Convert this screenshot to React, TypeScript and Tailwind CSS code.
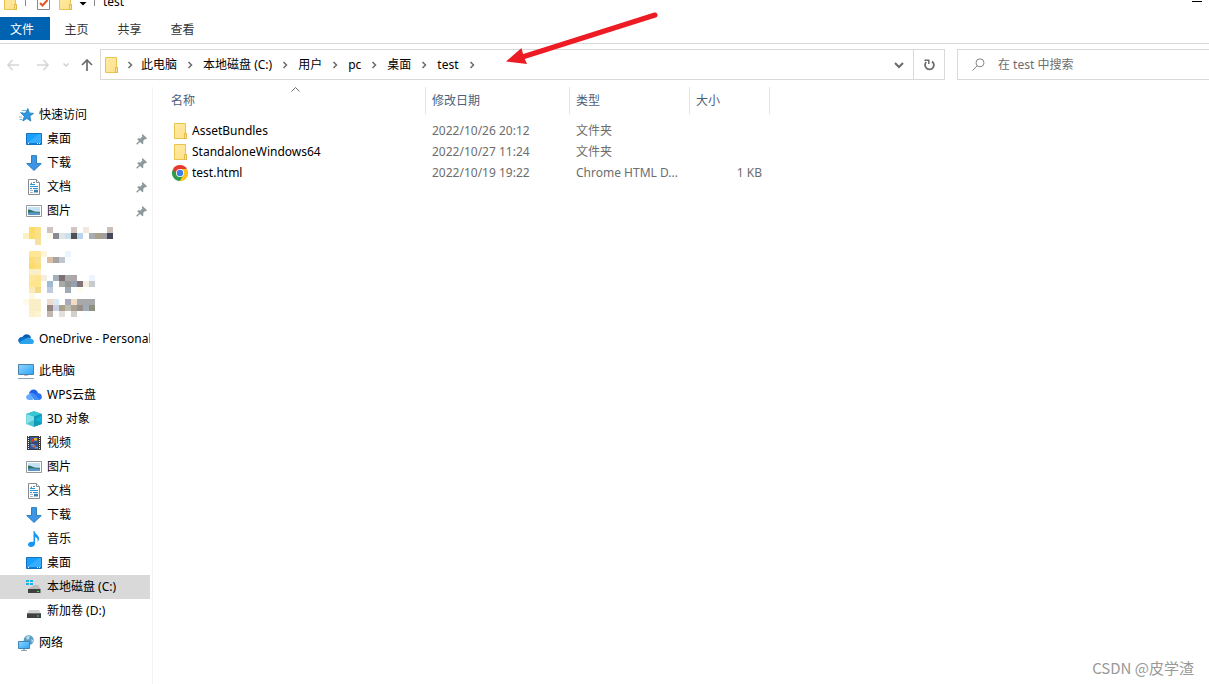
import React from 'react';

interface NavItem {
  label: string;
  icon: React.FC;
  pinned?: boolean;
  selected?: boolean;
}

interface FileEntry {
  name: string;
  icon: React.FC;
  modified: string;
  type: string;
  size: string;
}

const FolderIcon: React.FC = () => (
  <svg className="w-4 h-4 shrink-0" viewBox="0 0 16 16">
    <defs>
      <linearGradient id="folder" x1="0" y1="0" x2="1" y2="1">
        <stop offset="0" stopColor="#ffeaa3" />
        <stop offset="1" stopColor="#ffe08a" />
      </linearGradient>
    </defs>
    <path d="M2.5 .5h11v10h1v5h-12z" fill="url(#folder)" stroke="#e9c54f" />
    <path d="M12.500 15.500v-5h2v5z" fill="#fbe7a0" stroke="#e0b848" />
  </svg>
);

const QuickAccessIcon: React.FC = () => (
  <svg className="w-4 h-4 shrink-0" viewBox="0 0 16 16">
    <path d="M9.800 1.500l1.500 4.400 4.200.5-3.600 2.700.9 5-3.900-2.600-4.100 2.500 1.500-4.700-3-3 4.300-.2z" fill="#2f97de" stroke="#1a78c2" strokeWidth=".8" />
    <path d="M4 3.500h4M2 5.500h3M1 10h3M1.500 12.500h3" stroke="#6db9ea" />
  </svg>
);

const DesktopIcon: React.FC = () => (
  <svg className="w-4 h-4 shrink-0" viewBox="0 0 16 16">
    <path d="M.5 2.500h15v11H.5z" fill="#16a0ff" stroke="#1374bd" />
    <path d="M1 12L13 3h2v9z" fill="#35aeff" />
    <path d="M1 12.500h14" stroke="#0c7cd5" />
    <path d="M2 12.500h1M11 12.500h1M13 12.500h1" stroke="#fff" />
  </svg>
);

const DownloadIcon: React.FC = () => (
  <svg className="w-4 h-4 shrink-0" viewBox="0 0 16 16">
    <path d="M5.500 .6h5v7.900h4.800L8 15.500.7 8.500h4.800z" fill="#3c96e3" stroke="#2476be" strokeWidth=".9" />
  </svg>
);

const DocumentIcon: React.FC = () => (
  <svg className="w-4 h-4 shrink-0" viewBox="0 0 16 16">
    <path d="M2.500 .5h8l3 3v12h-11z" fill="#fff" stroke="#8b8b8b" />
    <path d="M10.500 .5v3h3" fill="#eee" stroke="#8b8b8b" />
    <path d="M7 3.500h2M4 5.500h5M4 7.500h8M7 9.500h5M4 9.500h2" stroke="#2c93d8" />
    <path d="M4 11.500h3M4 13.500h3" stroke="#a9b3ba" />
    <path d="M8 10.800h4v2.700H8z" fill="#3c7fa8" />
    <path d="M4 5.500l2-2.500v3z" fill="#2c93d8" />
  </svg>
);

const PictureIcon: React.FC = () => (
  <svg className="w-4 h-4 shrink-0" viewBox="0 0 16 16">
    <path d="M.5 2.500h15v11H.5z" fill="#fff" stroke="#989898" />
    <path d="M2 4h12v8H2z" fill="#c4e2f6" />
    <path d="M2 6.500c3 0 4 1.500 7 2 2 .4 4 .1 5 .5v1.500H2z" fill="#33715f" />
    <path d="M2 9.800c4-.8 8-.5 12 0V12H2z" fill="#5799c8" />
  </svg>
);

const OneDriveIcon: React.FC = () => (
  <svg className="w-4 h-4 shrink-0" viewBox="0 0 16 16">
    <path d="M4.500 6C6 2.200 11.500 2 13 6.500L10 9 2 12C-.8 9.800.4 6 4.500 6z" fill="#0a5db2" />
    <path d="M4 6c2-.5 3.500.3 5 1.400L4 13C-.5 12.800-1 6.600 4 6z" fill="#0872cc" />
    <path d="M8 7.500c1.500-1.500 4-1.500 5 .2 3.500.3 4 5.300.2 5.300H4.200c-2 0-3-1-3.200-1.600z" fill="#2ba4ec" />
  </svg>
);

const ComputerIcon: React.FC = () => (
  <svg className="w-4 h-4 shrink-0" viewBox="0 0 16 16">
    <defs>
      <linearGradient id="screen" x1="0" y1="0" x2="1" y2="1">
        <stop offset="0" stopColor="#8ed6ff" />
        <stop offset="1" stopColor="#2ea4f4" />
      </linearGradient>
    </defs>
    <path d="M.5 1.500h15v10H.5z" fill="url(#screen)" stroke="#4d83a8" />
    <path d="M6 12h4v1H6z" fill="#b6c6d1" />
    <path d="M0 15.500h16" stroke="#8ba3b9" />
  </svg>
);

const WpsCloudIcon: React.FC = () => (
  <svg className="w-4 h-4 shrink-0" viewBox="0 0 16 16">
    <path d="M3 7C3.500 1.500 10.500.8 12 6l-2 3-4-3z" fill="#1c62e8" />
    <path d="M6 5.800c2 .4 4.500 3.400 6.500 7.200H8.200C6.500 10.500 5 9.200 3.500 7z" fill="#3f8cfa" />
    <path d="M12 6c5 .5 5.200 6.900.5 7C11.500 11 10 9 9 8c1-1.300 2-2 3-2z" fill="#2874ef" />
    <path d="M3.500 7C-1 7.500-1 13 3.500 13H7C7 10 5.500 8 3.500 7z" fill="#65adff" />
  </svg>
);

const ObjectsIcon: React.FC = () => (
  <svg className="w-4 h-4 shrink-0" viewBox="0 0 16 16">
    <path d="M8 .3L15.700 3v10L8 15.800.3 13V3z" fill="#13a3bd" />
    <path d="M8 .3L15.700 3 8 5.500.3 3z" fill="#38c5d4" />
    <path d="M.3 3L8 5.500v10.300L.3 13z" fill="#86e2e8" />
    <path d="M1 12.500L8 9v6.800z" fill="#4cc5d0" />
    <path d="M8 5.500L15.700 3v10L8 15.800z" fill="#1398b5" />
    <path d="M9 9l6.700 3V4z" fill="#0fb4d8" />
  </svg>
);

const VideoIcon: React.FC = () => (
  <svg className="w-4 h-4 shrink-0" viewBox="0 0 16 16">
    <path d="M1 1h14v14H1z" fill="#3b3b3b" />
    <path d="M2.500 1v14M13.500 1v14" stroke="#f1f1f1" strokeDasharray="1 1" />
    <path d="M4 2h8v5.500H4zM4 8.500h8V14H4z" fill="#375aa8" />
    <path d="M6 4h2v3H6z" fill="#c83b31" />
    <path d="M8 3h3v2.500H8z" fill="#e9ae33" />
    <path d="M4 5.500h2v2H4z" fill="#3c8745" />
    <path d="M5 9h3v1.500H5zM9 12h3v1.500H9z" fill="#65a1df" />
    <path d="M6 11.500l2-1.500 2 1-2 1.500z" fill="#dc7632" />
  </svg>
);

const MusicIcon: React.FC = () => (
  <svg className="w-4 h-4 shrink-0" viewBox="0 0 16 16">
    <path d="M7.500 0h1c.3 3 4.500 4 4.500 7.500 0 1.500-.6 2.500-1.500 3.500.6-2.700-.2-4.300-2.500-5v6.500C9 14.600 7.300 16 5 16c-1.800 0-3-.9-3-2.400C2 11.500 4.500 10.300 7.500 11z" fill="#1597f2" />
  </svg>
);

const DriveIcon: React.FC = () => (
  <svg className="w-4 h-4 shrink-0" viewBox="0 0 16 16">
    <path d="M3 7h10l2 3.500H1z" fill="#d2d2d2" />
    <path d="M1 10.300h14V15H1z" fill="#404040" />
    <path d="M11 13h2" stroke="#48dc66" />
  </svg>
);

const SystemDriveIcon: React.FC = () => (
  <svg className="w-4 h-4 shrink-0" viewBox="0 0 16 16">
    <path d="M0 1h3v2H0zM4 1h3v2H4zM0 4h3v2H0zM4 4h3v2H4z" fill="#16b5ee" />
    <path d="M8 6h4l2.500 4H2z" fill="#bcbcbc" />
    <path d="M2 10h12.500v4H2z" fill="#404040" />
    <path d="M11 12.500h2" stroke="#48dc66" />
  </svg>
);

const NetworkIcon: React.FC = () => (
  <svg className="w-4 h-4 shrink-0" viewBox="0 0 16 16">
    <circle cx="10.700" cy="5.300" r="5" fill="#5a9bc4" />
    <path d="M8 2c2-1.500 3-1 4-.5L11 4 9 5zM13 4l2.500 1.500L14 8z" fill="#b4dbea" />
    <path d="M.5 6.500h11v7H.5z" fill="url(#screen)" stroke="#3f85b8" />
    <path d="M5 14h2v1H5z" fill="#9eb5c5" />
    <path d="M3 15.500h6" stroke="#8ba3b9" />
  </svg>
);

const ChromeIcon: React.FC = () => (
  <svg className="w-4 h-4 shrink-0" viewBox="0 0 16 16">
    <path d="M8 8L1.070 4A8 8 0 0 1 14.930 4z" fill="#e33b2e" />
    <path d="M8 8L14.930 4A8 8 0 0 1 8 16z" fill="#fcc31e" />
    <path d="M8 8v8A8 8 0 0 1 1.070 4z" fill="#2d9d4c" />
    <path d="M4.540 10L1.070 4 8 4z" fill="#e33b2e" />
    <path d="M11.460 10L8 16 4.540 10z" fill="#2d9d4c" />
    <path d="M8 4h6.930A8 8 0 0 1 8 16l3.460-6z" fill="#fcc31e" />
    <circle cx="8" cy="8" r="4" fill="#fff" />
    <circle cx="8" cy="8" r="3.200" fill="#3f7de8" />
  </svg>
);

const PinIcon: React.FC = () => (
  <svg className="w-[11px] h-[11px] shrink-0" viewBox="0 0 11 11">
    <path d="M6.500 0l4.500 4.300-1 .9-.9-.2-2 2 .3 2.300-1 .9L1.200 5.200l.9-1 2.300.2 2-2-.5-1.200z" fill="#8d979e" />
    <path d="M4 7L.7 10.300" stroke="#8d979e" strokeWidth="1.400" />
  </svg>
);

const CrumbChevron: React.FC = () => (
  <svg className="w-2 h-2" viewBox="0 0 8 8">
    <path d="M2.500 1l3 3-3 3" fill="none" stroke="#6b6b6b" strokeWidth="1.500" />
  </svg>
);

const quickAccess: NavItem[] = [
  { label: '桌面', icon: DesktopIcon, pinned: true },
  { label: '下载', icon: DownloadIcon, pinned: true },
  { label: '文档', icon: DocumentIcon, pinned: true },
  { label: '图片', icon: PictureIcon, pinned: true }
];

const thisPc: NavItem[] = [
  { label: 'WPS云盘', icon: WpsCloudIcon },
  { label: '3D 对象', icon: ObjectsIcon },
  { label: '视频', icon: VideoIcon },
  { label: '图片', icon: PictureIcon },
  { label: '文档', icon: DocumentIcon },
  { label: '下载', icon: DownloadIcon },
  { label: '音乐', icon: MusicIcon },
  { label: '桌面', icon: DesktopIcon },
  { label: '本地磁盘 (C:)', icon: SystemDriveIcon, selected: true },
  { label: '新加卷 (D:)', icon: DriveIcon }
];

const crumbs = ['此电脑', '本地磁盘 (C:)', '用户', 'pc', '桌面', 'test'];

const files: FileEntry[] = [
  { name: 'AssetBundles', icon: FolderIcon, modified: '2022/10/26 20:12', type: '文件夹', size: '' },
  { name: 'StandaloneWindows64', icon: FolderIcon, modified: '2022/10/27 11:24', type: '文件夹', size: '' },
  { name: 'test.html', icon: ChromeIcon, modified: '2022/10/19 19:22', type: 'Chrome HTML D...', size: '1 KB' }
];

// column, row, colour of each censored block
const mosaic: [number, number, string][] = [
  [1, 0, '#fbdc68'], [2, 0, '#f9e08a'], [4, 0, '#cfc3bd'], [8, 0, '#d3c6c0'], [10, 0, '#f3e8dc'], [14, 0, '#cbbfb8'],
  [0, 1, '#fbf0c0'], [1, 1, '#fbdc6c'], [2, 1, '#f9e08a'], [4, 1, '#fffbec'], [5, 1, '#8b8991'], [6, 1, '#dfe7e6'],
  [7, 1, '#c8dfec'], [8, 1, '#4f5053'], [9, 1, '#b8d4ef'], [11, 1, '#a9adb0'], [12, 1, '#a8a28c'], [13, 1, '#a39ea0'], [14, 1, '#46465f'],
  [2, 2, '#f5e2a0'],
  [1, 4, '#fee794'], [2, 4, '#fde698'], [3, 4, '#fdf6dc'], [7, 4, '#eaf5ff'],
  [1, 5, '#fadd76'], [2, 5, '#f7e096'], [4, 5, '#dbbda1'], [5, 5, '#a6a4a6'], [6, 5, '#bfc5cf'], [7, 5, '#f8fdff'],
  [1, 6, '#fbdb6a'], [2, 6, '#fbdf80'],
  [1, 7, '#faf0c8'], [2, 7, '#faf0c8'],
  [1, 8, '#fde899'], [2, 8, '#fde495'], [3, 8, '#f5ece4'], [5, 8, '#a4afba'], [6, 8, '#7d7073'], [7, 8, '#a9abad'], [8, 8, '#aea7a8'], [11, 8, '#ecf5fe'],
  [1, 9, '#ffe68c'], [2, 9, '#ffe68c'], [4, 9, '#9fbbd2'], [6, 9, '#a6aba9'], [7, 9, '#949894'], [8, 9, '#95a0b0'], [9, 9, '#82747a'], [10, 9, '#f7efe2'], [11, 9, '#c6cccd'],
  [1, 10, '#fbeab8'], [2, 10, '#f3d988'], [4, 10, '#c1c9dc'], [7, 10, '#9eaab6'], [9, 10, '#fffdf0'],
  [1, 11, '#fdf8e4'],
  [0, 12, '#fffbe8'], [1, 12, '#faeec4'], [2, 12, '#faefca'], [4, 12, '#ecdcd0'], [5, 12, '#d8e8f4'], [7, 12, '#a8aab6'], [8, 12, '#f0dcc4'], [9, 12, '#a7a8aa'], [10, 12, '#a7a8aa'], [11, 12, '#a7a8aa'],
  [1, 13, '#faeec4'], [2, 13, '#faeec4'], [4, 13, '#978680'], [5, 13, '#c9cfe4'], [6, 13, '#aaa188'], [7, 13, '#bcbbb2'], [8, 13, '#a8a191'], [9, 13, '#988e8a'], [10, 13, '#9facb4'], [11, 13, '#8e9080'],
  [1, 14, '#fcf0c8'], [2, 14, '#fef4d4'], [4, 14, '#c0b8ae'], [6, 14, '#e2dfdd'], [8, 14, '#d2d0c8'], [10, 14, '#f8fdff']
];

const NavRow: React.FC<{ item: NavItem; root?: boolean }> = ({ item, root = false }) => {
  const Icon = item.icon;
  return (
    <li>
      <a
        href="#"
        className={`flex items-center gap-[5px] h-6 pr-[3px] whitespace-nowrap overflow-hidden ${
          root ? 'pl-[18px]' : 'pl-[26px]'
        } ${item.selected ? 'bg-[#d9d9d9]' : ''}`}
      >
        <Icon />
        <span>{item.label}</span>
        {item.pinned && <span className="flex ml-auto"><PinIcon /></span>}
      </a>
    </li>
  );
};

const TitleBar: React.FC = () => (
  <div className="h-[17px] overflow-hidden">
    <div className="flex items-center h-[30px] -mt-[13px] pl-[2px] pr-[7px]">
      <FolderIcon />
      <span className="w-px h-2 ml-[7px] bg-[#8a8a8a]" />
      <button className="ml-[11px]" aria-label="属性">
        <svg className="w-[13px] h-4" viewBox="0 0 13 16">
          <path d="M.5 .5h12v15H.5z" fill="#fff" stroke="#8a8a8a" />
          <path d="M3 9l2.500 2.500L10.500 6" fill="none" stroke="#e2551f" strokeWidth="2" />
        </svg>
      </button>
      <button className="ml-[7px]" aria-label="新建文件夹"><FolderIcon /></button>
      <button className="ml-[6px]" aria-label="自定义快速访问工具栏">
        <svg className="w-2 h-2" viewBox="0 0 8 8">
          <path d="M1 1.500h6" stroke="#000" />
          <path d="M.5 4h7L4 7.500z" fill="#000" />
        </svg>
      </button>
      <span className="w-px h-2 ml-[7px] bg-[#8a8a8a]" />
      <h1 className="ml-2">test</h1>
      <button className="ml-auto" aria-label="最小化">
        <svg className="w-[10px] h-[2px]" viewBox="0 0 10 2">
          <path d="M0 .5h10" stroke="#000" />
        </svg>
      </button>
    </div>
  </div>
);

const RibbonTabs: React.FC = () => (
  <nav className="flex h-[27px] pb-[3px] border-b border-[#dadbdc] text-[#333]">
    <button className="w-[50px] pt-[2px] pr-[6px] bg-[#0063b1] text-white">文件</button>
    <button className="w-[53px] pt-[2px]">主页</button>
    <button className="w-[53px] pt-[2px]">共享</button>
    <button className="w-[53px] pt-[2px]">查看</button>
  </nav>
);

const AddressBar: React.FC = () => (
  <div className="flex items-stretch h-[41px] pt-[5px] pb-[5px]">
    <div className="flex items-center w-[100px] pl-[7px] shrink-0">
      <button aria-label="后退">
        <svg className="w-3 h-3" viewBox="0 0 12 12">
          <path d="M12 6H1M5.500 1L1 6l4.500 5" fill="none" stroke="#d5d5d5" strokeWidth="1.500" />
        </svg>
      </button>
      <button className="ml-[18px]" aria-label="前进">
        <svg className="w-3 h-3" viewBox="0 0 12 12">
          <path d="M0 6h11M6.500 1L11 6l-4.500 5" fill="none" stroke="#d5d5d5" strokeWidth="1.500" />
        </svg>
      </button>
      <button className="ml-[13px]" aria-label="最近浏览的位置">
        <svg className="w-2 h-2" viewBox="0 0 8 8">
          <path d="M1.500 2.500L4 5l2.500-2.500" fill="none" stroke="#d0d0d0" strokeWidth="1.500" />
        </svg>
      </button>
      <button className="ml-[11px]" aria-label="上移">
        <svg className="w-3 h-3" viewBox="0 0 12 12">
          <path d="M6 12V1M1 6l5-5 5 5" fill="none" stroke="#6b6b6b" strokeWidth="1.700" />
        </svg>
      </button>
    </div>
    <div className="flex flex-1 items-center min-w-0 border border-[#d9d9d9] pl-[2px]">
      <FolderIcon />
      <span className="flex justify-center w-[22px]"><CrumbChevron /></span>
      <ol className="flex items-center whitespace-nowrap">
        {crumbs.map((crumb) => (
          <li key={crumb} className="flex items-center">
            <a href="#">{crumb}</a>
            <button className="flex justify-center w-[26px]" aria-label={`展开 ${crumb}`}><CrumbChevron /></button>
          </li>
        ))}
      </ol>
      <button className="ml-auto mr-[9px]" aria-label="以前的位置">
        <svg className="w-[10px] h-[10px]" viewBox="0 0 10 10">
          <path d="M1 3l4 4 4-4" fill="none" stroke="#6b6b6b" strokeWidth="2" />
        </svg>
      </button>
      <button className="flex items-center justify-center w-[31px] h-full border-l border-[#d9d9d9]" aria-label="刷新">
        <svg className="w-3 h-3" viewBox="0 0 12 12">
          <path d="M9 2.400A4.400 4.400 0 1 1 3.200 3" fill="none" stroke="#6b6b6b" strokeWidth="1.800" />
          <path d="M1.500 1.200h4.300V5" fill="none" stroke="#6b6b6b" strokeWidth="1.500" />
        </svg>
      </button>
    </div>
    <label className="flex items-center w-[252px] ml-3 shrink-0 border border-r-0 border-[#d9d9d9] pl-[14px]">
      <svg className="w-[13px] h-[13px] shrink-0" viewBox="0 0 13 13">
        <circle cx="8" cy="4.800" r="4" fill="none" stroke="#858585" />
        <path d="M5.200 7.800L.5 12.500" stroke="#858585" />
      </svg>
      <input
        type="search"
        aria-label="搜索"
        placeholder="在 test 中搜索"
        className="flex-1 min-w-0 ml-[13px] bg-transparent outline-none placeholder:text-[#6d6d6d]"
      />
    </label>
  </div>
);

const Sidebar: React.FC = () => (
  <aside className="flex flex-col gap-2 w-[153px] shrink-0 pr-[2px] border-r border-[#f3f3f3] pt-4">
    <ul>
      <NavRow item={{ label: '快速访问', icon: QuickAccessIcon }} root />
      {quickAccess.map((item) => (
        <NavRow key={item.label} item={item} />
      ))}
      <li className="h-24 pl-[23px] pt-1">
        <svg className="w-[90px] h-[90px]" viewBox="0 0 90 90" shapeRendering="crispEdges">
          {mosaic.map(([col, row, color]) => (
            <rect key={`${col}-${row}`} x={col * 6} y={row * 6} width="6" height="6" fill={color} />
          ))}
        </svg>
      </li>
    </ul>
    <ul>
      <NavRow item={{ label: 'OneDrive - Personal', icon: OneDriveIcon }} root />
    </ul>
    <ul>
      <NavRow item={{ label: '此电脑', icon: ComputerIcon }} root />
      {thisPc.map((item) => (
        <NavRow key={item.label} item={item} />
      ))}
    </ul>
    <ul>
      <NavRow item={{ label: '网络', icon: NetworkIcon }} root />
    </ul>
  </aside>
);

const FileTable: React.FC = () => (
  <table className="table-fixed w-[617px] border-separate border-spacing-0 text-left text-[#6d6d6d]">
    <thead className="text-[#4c607a]">
      <tr className="h-[27px]">
        <th className="relative w-[273px] pl-[18px] font-normal border-r border-[#e5e5e5]">
          名称
          <svg className="absolute left-[138px] top-0 w-[9px] h-[5px]" viewBox="0 0 9 5">
            <path d="M.5 4.500l4-4 4 4" fill="none" stroke="#6b6b6b" />
          </svg>
        </th>
        <th className="w-[144px] pl-[6px] font-normal border-r border-[#e5e5e5]">修改日期</th>
        <th className="w-[120px] pl-[6px] font-normal border-r border-[#e5e5e5]">类型</th>
        <th className="w-[80px] pl-[6px] font-normal border-r border-[#e5e5e5]">大小</th>
      </tr>
    </thead>
    <tbody>
      <tr className="h-[6px]"><td colSpan={4}></td></tr>
      {files.map((file) => {
        const Icon = file.icon;
        return (
          <tr key={file.name} className="h-[21px]">
            <td className="pl-[19px] text-black">
              <a href="#" className="flex items-center gap-1">
                <Icon />
                {file.name}
              </a>
            </td>
            <td className="pl-[6px]">{file.modified}</td>
            <td className="pl-[6px] whitespace-nowrap">{file.type}</td>
            <td className="pr-2 text-right">{file.size}</td>
          </tr>
        );
      })}
    </tbody>
  </table>
);

export default function App() {
  return (
    <div className="relative flex flex-col min-h-screen bg-white text-black text-[12px] leading-[18px] overflow-hidden font-['Noto_Sans','Noto_Sans_CJK_SC',sans-serif]">
      <TitleBar />
      <RibbonTabs />
      <AddressBar />
      <div className="flex flex-1 pt-[2px]">
        <Sidebar />
        <main className="flex-1 min-w-0">
          <FileTable />
        </main>
      </div>

      <svg className="absolute left-[500px] top-[8px] w-[164px] h-[62px] pointer-events-none" viewBox="0 0 164 62">
        <path d="M155 7L24 48.500" stroke="#ed1c24" strokeWidth="5" strokeLinecap="round" />
        <path d="M6 53.500L21.500 40l2 8L27 56z" fill="#ed1c24" />
      </svg>
      <p className="absolute right-[15px] bottom-[6px] text-[15px] leading-5 text-[#999] font-['Noto_Sans_CJK_SC',sans-serif]">
        CSDN @皮学渣
      </p>
    </div>
  );
}
